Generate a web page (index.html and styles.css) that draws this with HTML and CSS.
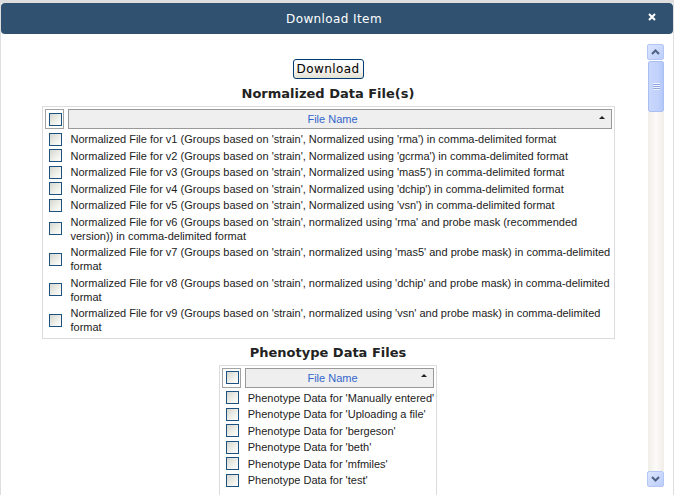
FILE: index.html
```html
<!DOCTYPE html>
<html>
<head>
<meta charset="utf-8">
<title>Download Item</title>
<link rel="stylesheet" href="styles.css">
</head>
<body>
<div class="dialog">
  <div class="titlebar">
    <span class="title">Download Item</span>
    <span class="close"><svg width="8" height="8" viewBox="0 0 8 8"><path d="M1 1 L7 7 M7 1 L1 7" stroke="#fff" stroke-width="2" fill="none"/></svg></span>
  </div>
  <div class="dbody">
    <div class="content">
      <button class="dl">Download</button>
      <h2 class="heading first">Normalized Data File(s)</h2>
      <div class="ftable wide">
        <div class="hchk"><span class="cb"></span></div>
        <div class="hcell"><span class="hlabel">File Name</span><span class="sort"></span></div>
        <div class="rchk"><span class="cb"></span></div><div class="rtext">Normalized File for v1 (Groups based on 'strain', Normalized using 'rma') in comma-delimited format</div>
        <div class="rchk"><span class="cb"></span></div><div class="rtext">Normalized File for v2 (Groups based on 'strain', Normalized using 'gcrma') in comma-delimited format</div>
        <div class="rchk"><span class="cb"></span></div><div class="rtext">Normalized File for v3 (Groups based on 'strain', Normalized using 'mas5') in comma-delimited format</div>
        <div class="rchk"><span class="cb"></span></div><div class="rtext">Normalized File for v4 (Groups based on 'strain', Normalized using 'dchip') in comma-delimited format</div>
        <div class="rchk"><span class="cb"></span></div><div class="rtext">Normalized File for v5 (Groups based on 'strain', Normalized using 'vsn') in comma-delimited format</div>
        <div class="rchk"><span class="cb"></span></div><div class="rtext">Normalized File for v6 (Groups based on 'strain', normalized using 'rma' and probe mask (recommended version)) in comma-delimited format</div>
        <div class="rchk"><span class="cb"></span></div><div class="rtext">Normalized File for v7 (Groups based on 'strain', normalized using 'mas5' and probe mask) in comma-delimited format</div>
        <div class="rchk"><span class="cb"></span></div><div class="rtext">Normalized File for v8 (Groups based on 'strain', normalized using 'dchip' and probe mask) in comma-delimited format</div>
        <div class="rchk"><span class="cb"></span></div><div class="rtext">Normalized File for v9 (Groups based on 'strain', normalized using 'vsn' and probe mask) in comma-delimited format</div>
      </div>
      <h2 class="heading second">Phenotype Data Files</h2>
      <div class="ftable narrow">
        <div class="hchk"><span class="cb"></span></div>
        <div class="hcell"><span class="hlabel">File Name</span><span class="sort"></span></div>
        <div class="rchk"><span class="cb"></span></div><div class="rtext">Phenotype Data for 'Manually entered'</div>
        <div class="rchk"><span class="cb"></span></div><div class="rtext">Phenotype Data for 'Uploading a file'</div>
        <div class="rchk"><span class="cb"></span></div><div class="rtext">Phenotype Data for 'bergeson'</div>
        <div class="rchk"><span class="cb"></span></div><div class="rtext">Phenotype Data for 'beth'</div>
        <div class="rchk"><span class="cb"></span></div><div class="rtext">Phenotype Data for 'mfmiles'</div>
        <div class="rchk"><span class="cb"></span></div><div class="rtext">Phenotype Data for 'test'</div>
      </div>
    </div>
    <div class="scrollbar">
      <div class="sbtn"><svg width="9" height="6" viewBox="0 0 9 6"><path d="M1 5 L4.5 1.5 L8 5" fill="none" stroke="#4d6185" stroke-width="2"/></svg></div>
      <div class="thumb"><span class="grip"></span></div>
      <div class="track"></div>
      <div class="sbtn"><svg width="9" height="6" viewBox="0 0 9 6"><path d="M1 1 L4.5 4.5 L8 1" fill="none" stroke="#4d6185" stroke-width="2"/></svg></div>
    </div>
  </div>
</div>
</body>
</html>
```
FILE: styles.css
```css
* { box-sizing: border-box; }
html, body { margin: 0; height: 100%; }
body {
  background: #dedede;
  font-family: "Liberation Sans", Arial, sans-serif;
  font-size: 11px;
  color: #222;
  overflow: hidden;
}
.dialog {
  margin: 3px 0 0 1px;
  width: 672px;
  height: 492px;
  display: flex;
  flex-direction: column;
  background: #fff;
}
.titlebar {
  flex: none;
  height: 31px;
  background: #305270;
  border-radius: 4px;
  position: relative;
  display: flex;
  align-items: center;
  justify-content: center;
  padding-right: 6px;
  color: #fff;
  font-family: "DejaVu Sans", Verdana, sans-serif;
  font-size: 12px;
  letter-spacing: 0.4px;
}
.close {
  position: absolute;
  right: 17px;
  top: 10px;
  display: flex;
}
.dbody {
  flex: 1;
  display: flex;
  padding: 0 9px 0 8px;
  min-height: 0;
}
.content {
  flex: 1;
  overflow: hidden;
  padding-top: 25px;
}
.dl {
  display: block;
  margin: 0 auto;
  width: 71px;
  height: 20px;
  padding: 0;
  border: 1px solid #003c74;
  border-radius: 3px;
  background: linear-gradient(#ffffff, #f4f3ee 60%, #e3e0d3);
  font-family: "DejaVu Sans", Verdana, sans-serif;
  font-size: 12px;
  letter-spacing: 0.4px;
  color: #000;
}
.heading {
  margin: 7px 0 4px;
  text-align: center;
  font-family: "DejaVu Sans", Verdana, sans-serif;
  font-size: 13px;
  line-height: 16px;
  font-weight: bold;
  color: #222;
}
.heading.second { margin: 6px 0 4px; }
.ftable {
  display: grid;
  grid-template-columns: 19px 1fr;
  column-gap: 4px;
  border: 1px solid #dcdcdc;
  padding: 2px;
  margin: 0 auto;
}
.wide { width: 573px; }
.narrow { width: fit-content; padding-bottom: 20px; }
.hchk {
  height: 20px;
  border: 1px solid #a3a3a3;
  display: flex;
  align-items: center;
  padding-left: 3px;
  margin-bottom: 2px;
}
.hcell {
  height: 20px;
  border: 1px solid #999;
  background: #efefef;
  display: flex;
  align-items: center;
  margin-bottom: 2px;
  color: #3366cc;
}
.hlabel { flex: 1; text-align: center; }
.sort {
  width: 0;
  height: 0;
  border-left: 3px solid transparent;
  border-right: 3px solid transparent;
  border-bottom: 3px solid #222;
  margin: 0 6px 4px 2px;
}
.rchk {
  display: flex;
  align-items: center;
  padding-left: 4px;
}
.rtext {
  padding: 1.25px 0 1.25px 3px;
  line-height: 14px;
  color: #222;
}
.cb {
  display: block;
  width: 13px;
  height: 13px;
  border: 1px solid #1c5180;
  background: linear-gradient(135deg, #d6d6d0 0%, #efefea 55%, #fdfdfd 100%);
}
.scrollbar {
  flex: none;
  width: 17px;
  height: 443px;
  margin-top: 10px;
  display: flex;
  flex-direction: column;
}
.sbtn {
  flex: none;
  height: 16px;
  border: 1px solid #b4c6f3;
  border-radius: 2px;
  background: linear-gradient(135deg, #dbe5fe, #bccdf9);
  display: flex;
  align-items: center;
  justify-content: center;
}
.thumb {
  flex: none;
  height: 51px;
  margin: 1px 0 0 1px;
  border: 1px solid #aabff3;
  border-radius: 2px;
  background: linear-gradient(90deg, #c9d7fc, #c2d2fc 60%, #b5c8f8);
  display: flex;
  align-items: center;
  justify-content: center;
}
.grip {
  display: block;
  width: 7px;
  height: 7px;
  background: repeating-linear-gradient(#eef3ff 0 1px, #90a7e6 1px 2px);
}
.track {
  flex: 1;
  margin-left: 1px;
  background: linear-gradient(90deg, #f1eee8, #fbfaf8 50%, #f1eee8);
}
```
